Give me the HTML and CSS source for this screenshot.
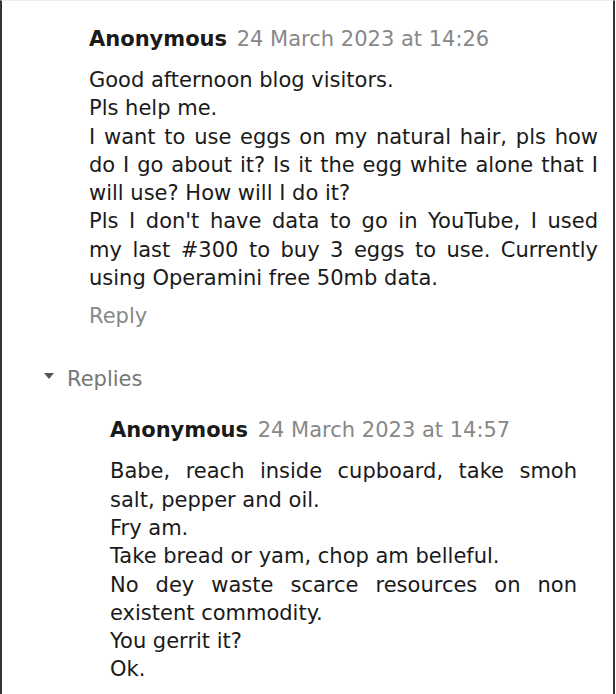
FILE: index.html
```html
<!DOCTYPE html>
<html lang="en">
<head>
    <meta charset="UTF-8">
    <title>Comments</title>
    <link rel="stylesheet" href="styles.css">
</head>
<body>
    <div class="comments">
        <div class="comment">
            <div class="comment-header">
                <span class="user">Anonymous</span>
                <span class="date">24 March 2023 at 14:26</span>
            </div>
            <p class="comment-content">Good afternoon blog visitors.<br>Pls help me.<br>I want to use eggs on my natural hair, pls how do I go about it? Is it the egg white alone that I will use? How will I do it?<br>Pls I don't have data to go in YouTube, I used my last #300 to buy 3 eggs to use. Currently using Operamini free 50mb data.</p>
            <span class="reply-link">Reply</span>
        </div>
        <div class="replies">
            <div class="replies-toggle"><span class="arrow"></span>Replies</div>
            <div class="comment reply">
                <div class="comment-header">
                    <span class="user">Anonymous</span>
                    <span class="date">24 March 2023 at 14:57</span>
                </div>
                <p class="comment-content">Babe, reach inside cupboard, take smoh salt, pepper and oil.<br>Fry am.<br>Take bread or yam, chop am belleful.<br>No dey waste scarce resources on non existent commodity.<br>You gerrit it?<br>Ok.</p>
            </div>
        </div>
    </div>
</body>
</html>
```

FILE: styles.css
```css
body {
    margin: 0;
    background: #fff;
    font-family: "DejaVu Sans", Verdana, sans-serif;
    font-size: 21px;
    color: #1a1a1a;
}

.comments {
    height: 694px;
    box-sizing: border-box;
    width: 615px;
    border-left: 2px solid #333;
    border-right: 2px solid #333;
    border-top: 1px solid #eee;
    overflow: hidden;
}

.comment {
    padding: 24px 15px 0 87px;
}

.comment-header {
    line-height: 28px;
}

.user {
    font-weight: bold;
    color: #1a1a1a;
}

.date {
    color: #888;
    margin-left: 3px;
}

.comment-content {
    margin: 13px 0 0;
    line-height: 28.3px;
    text-align: justify;
}

.reply-link {
    display: block;
    margin-top: 10px;
    line-height: 28px;
    color: #888;
}

.replies {
    margin-top: 35px;
}

.replies-toggle {
    padding-left: 42px;
    line-height: 28px;
    color: #777;
}

.arrow {
    display: inline-block;
    width: 0;
    height: 0;
    border-left: 5px solid transparent;
    border-right: 5px solid transparent;
    border-top: 6px solid #555;
    margin-right: 13px;
    vertical-align: 7px;
}

.comment.reply {
    padding: 23px 36px 0 108px;
}
```
